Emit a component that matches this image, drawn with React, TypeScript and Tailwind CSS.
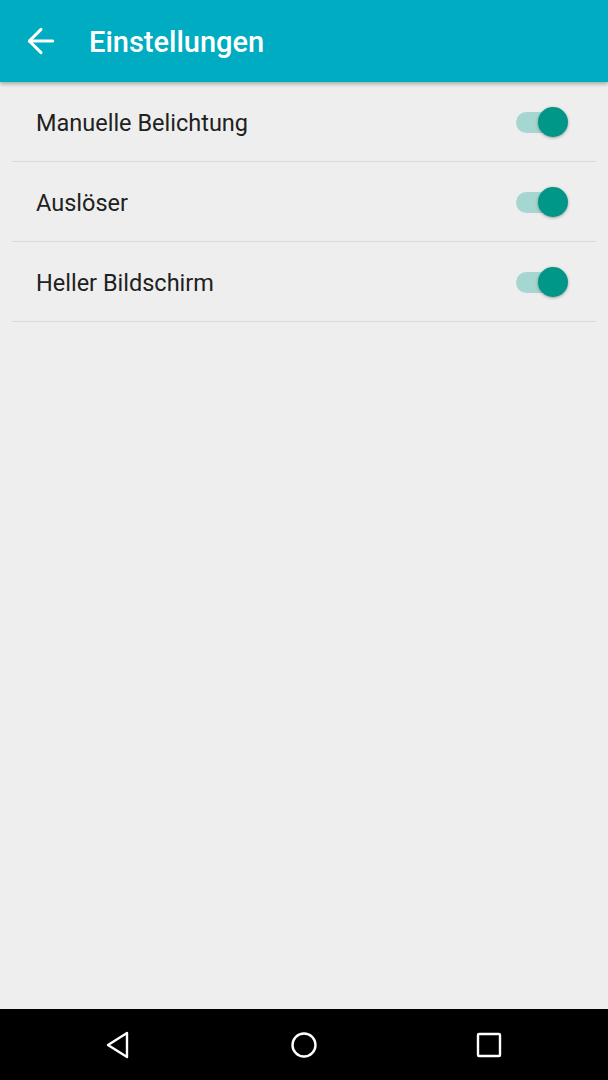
import { ArrowLeft } from "lucide-react";

const settings = ["Manuelle Belichtung", "Auslöser", "Heller Bildschirm"];

function Switch() {
  return (
    <div className="relative h-[30px] w-[52px] shrink-0">
      <div className="absolute left-0 right-[1px] top-[5px] h-[21px] rounded-full bg-[#a5d6d0]" />
      <div className="absolute right-0 top-0 h-[30px] w-[30px] rounded-full bg-[#009688] shadow-[0_1px_3px_rgba(0,0,0,0.35)]" />
    </div>
  );
}

export default function App() {
  return (
    <div className="flex h-[1080px] w-[608px] flex-col bg-[#eeeeee] font-['Roboto',sans-serif]">
      <header className="relative z-10 flex h-[82px] shrink-0 items-center bg-[#00acc1] text-white shadow-[0_2px_4px_rgba(0,0,0,0.3)]">
        <ArrowLeft className="ml-[21px] h-[40px] w-[40px]" strokeWidth={1.8} />
        <h1 className="ml-[28px] pt-[3px] text-[29px] font-medium">Einstellungen</h1>
      </header>

      <main className="flex-1 px-[12px]">
        {settings.map((s) => (
          <div key={s} className="flex h-[80px] items-center justify-between border-b border-[#d9d9d9] pl-[24px] pr-[28px]">
            <span className="pt-[5px] text-[23.5px] text-[#212121]">{s}</span>
            <Switch />
          </div>
        ))}
      </main>

      <nav className="flex h-[71px] shrink-0 items-center justify-between bg-black pl-[104px] pr-[106px]">
        <svg width="28" height="30" viewBox="0 0 28 30" fill="none" stroke="white" strokeWidth="2.4" strokeLinejoin="round">
          <path d="M23 3 L4 15 L23 27 Z" />
        </svg>
        <svg width="28" height="28" viewBox="0 0 28 28" fill="none" stroke="white" strokeWidth="2.4">
          <circle cx="14" cy="14" r="11.5" />
        </svg>
        <svg width="26" height="26" viewBox="0 0 26 26" fill="none" stroke="white" strokeWidth="2.4">
          <rect x="2" y="2" width="22" height="22" rx="1" />
        </svg>
      </nav>
    </div>
  );
}
